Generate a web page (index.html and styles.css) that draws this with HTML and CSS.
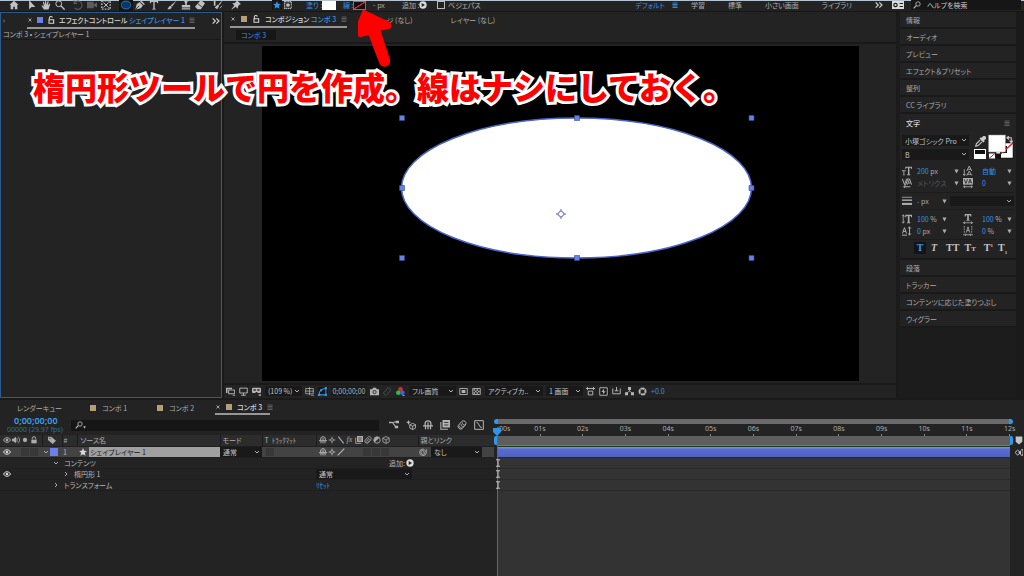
FILE: index.html
```html
<!DOCTYPE html>
<html lang="ja">
<head>
<meta charset="utf-8">
<meta name="viewport" content="width=device-width, initial-scale=1">
<title>コンポ 3</title>
<link rel="stylesheet" href="styles.css">
</head>
<body>
<svg class="sprite" aria-hidden="true">
  <symbol id="home" viewBox="0 0 12 12"><path fill="currentColor" d="M6 1 0.5 6H2v5h3V8h2v3h3V6h1.500z"/></symbol>
  <symbol id="arrow" viewBox="0 0 12 12"><path fill="currentColor" d="M2.500 0v11l3-2.700 4.500.2z"/></symbol>
  <symbol id="hand" viewBox="0 0 12 12"><path fill="currentColor" d="M3.500 11.500 0.500 7l1-.7L3.500 8 2.300 2.500l1.200-.3L4.800 6 5 1h1.200l.4 5L8 1.500l1.200.3L8.500 6.500l1.700-2.300 1 .6L9 11.500z"/></symbol>
  <symbol id="search" viewBox="0 0 12 12"><circle cx="7.500" cy="4.500" r="3.300" fill="none" stroke="currentColor" stroke-width="1.200"/><path stroke="currentColor" stroke-width="1.600" d="M5 7 1 11"/></symbol>
  <symbol id="zoomt" viewBox="0 0 12 12"><circle cx="4.500" cy="4.500" r="3.500" fill="none" stroke="currentColor" stroke-width="1.200"/><path stroke="currentColor" stroke-width="1.600" d="m7 7 4.500 4.500"/></symbol>
  <symbol id="rotate" viewBox="0 0 12 12"><path fill="none" stroke="currentColor" stroke-width="1.300" d="M2 3a5 5 0 1 1 0 6.500M1.500 0.500V4H5"/></symbol>
  <symbol id="video" viewBox="0 0 12 12"><path fill="currentColor" d="M0 2h8v3l4-2v6L8 7v3H0z"/></symbol>
  <symbol id="anchor" viewBox="0 0 12 12"><path fill="none" stroke="currentColor" stroke-width="1.600" stroke-dasharray="2 1.500" d="M1 1h10v10H1z"/><path stroke="currentColor" stroke-width="1.200" d="M3 3l6 6M9 3 3 9"/></symbol>
  <symbol id="ellipse" viewBox="0 0 12 12"><ellipse cx="6" cy="6" rx="6" ry="4.700" fill="#0a3763" stroke="#2c83cf"/></symbol>
  <symbol id="pen" viewBox="0 0 12 12"><path fill="currentColor" d="m7 0 5 5-1.500 1L6 1.500zM5.500 2.500 9.500 6.500 7 10 0.500 11.500 2 5z"/><path stroke="#232323" d="M1 11l4-4"/></symbol>
  <symbol id="tt" viewBox="0 0 12 12"><path fill="currentColor" d="M1 1h10v3H10L9 2.300H6.800v8l1.400.4v.8H3.800v-.8l1.400-.4v-8H3L2 4H1z"/></symbol>
  <symbol id="brush" viewBox="0 0 12 12"><path fill="currentColor" d="M11.500.5 6 8 4.500 6.500zM4 7l1.700 1.700C5 11 2.500 11.500.5 11 2 10 2 7.500 4 7z"/></symbol>
  <symbol id="stamp" viewBox="0 0 12 12"><path fill="currentColor" d="M4 0h4v2L7 3.500V6h4v3H1V6h4V3.500L4 2zM1 10h10v1.500H1z"/></symbol>
  <symbol id="eraser" viewBox="0 0 12 12"><path fill="currentColor" d="m7 0 5 4-5 7H3L0 8z"/><path stroke="#232323" d="m3.500 4.500 5 4"/></symbol>
  <symbol id="roto" viewBox="0 0 12 12"><path fill="currentColor" d="M12 0 8 6 6.500 5zM6 5.500 7.500 7 5 11 2 9zM1 1l2 0 0 6-2 0z"/><path fill="none" stroke="currentColor" d="m8 10 3-3"/></symbol>
  <symbol id="pin" viewBox="0 0 12 12"><path fill="currentColor" d="m7 0 5 5-1.500.5-2 2-.5 3L5.500 8 1 11.500.5 11 4 6.500 1.500 4l3-.5 2-2z"/></symbol>
  <symbol id="star" viewBox="0 0 12 12"><path fill="currentColor" d="m6 0 1.700 4.200L12 4.500 8.700 7.300 9.800 11.700 6 9.300 2.200 11.700 3.300 7.300 0 4.500l4.300-.3z"/></symbol>
  <symbol id="maskmode" viewBox="0 0 12 12"><path fill="none" stroke="currentColor" stroke-width="1.800" stroke-dasharray="1.800 .8" d="M1 1h10v10H1z"/><circle cx="6" cy="6" r="2.800" fill="currentColor"/></symbol>
  <symbol id="play" viewBox="0 0 12 12"><circle cx="6" cy="6" r="5.500" fill="#ddd"/><path fill="#222" d="M4 3v6l5-3z"/></symbol>
  <symbol id="lock" viewBox="0 0 12 12"><path fill="currentColor" d="M2 5.500h8V11H2z"/><path fill="none" stroke="currentColor" stroke-width="1.500" d="M3.500 5V3.500a2.500 2.500 0 0 1 5 0V5"/></symbol>
  <symbol id="unlock" viewBox="0 0 12 12"><path fill="none" stroke="currentColor" stroke-width="1.600" d="M3 5.500h7V11H3zM3.500 5V3a2.300 2.300 0 0 1 4.500-.5"/></symbol>
  <symbol id="close" viewBox="0 0 12 12"><path stroke="currentColor" stroke-width="1.400" d="m3 3 6 6M9 3 3 9"/></symbol>
  <symbol id="menu" viewBox="0 0 12 12"><path stroke="currentColor" stroke-width="1.800" d="M1 2h10M1 5h10M1 8h10M1 11h10"/></symbol>
  <symbol id="more" viewBox="0 0 12 12"><path fill="none" stroke="currentColor" stroke-width="1.700" d="m1 2 4 4-4 4M6.500 2l4 4-4 4"/></symbol>
  <symbol id="chev" viewBox="0 0 12 12"><path fill="none" stroke="currentColor" stroke-width="1.800" d="m2 4 4 4 4-4"/></symbol>
  <symbol id="chevr" viewBox="0 0 12 12"><path fill="none" stroke="currentColor" stroke-width="1.800" d="m4 2 4 4-4 4"/></symbol>
  <symbol id="tri" viewBox="0 0 12 12"><path fill="currentColor" d="M1 1h10L6 11z"/></symbol>
  <symbol id="book" viewBox="0 0 12 12"><path fill="#ddd" d="M0 2h12v8H0z"/><circle cx="3.500" cy="6" r="1.700" fill="none" stroke="#222" stroke-width="1.200"/><path stroke="#222" stroke-width="1.200" d="M7.500 4.500H11M7.500 7.500H11"/></symbol>
  <symbol id="drop" viewBox="0 0 12 12"><path fill="currentColor" d="M8.500.5a2 2 0 0 1 3 3L10 5l.5 1L9 7 5 3l1-1.500 1 .5z"/><path fill="none" stroke="currentColor" stroke-width="1.200" d="M5.500 4.500 1.500 8.500.8 11.200 3.500 10.500l4-4"/></symbol>
  <symbol id="swap" viewBox="0 0 12 12"><path fill="none" stroke="currentColor" stroke-width="1.800" d="M3 3h6v7M5 0 1.500 3 5 6M6 8l3 3.500L12 8"/></symbol>
  <symbol id="sizeT" viewBox="0 0 12 12"><path fill="currentColor" d="M4 1h8v2.500h-.8L10.600 2H8.900v8l1.100.3v.7H6v-.7L7.200 10V2H5.500L4.800 3.500H4zM0 5h4.500v1.500H4L3.700 6h-.9v4.500h.7v.5H1v-.5h.7V6H.8l-.3.500H0z"/></symbol>
  <symbol id="leading" viewBox="0 0 12 12"><path fill="none" stroke="currentColor" stroke-width="1.100" d="M4.500 6 7.500 0l3 6M5.500 4h4M4.500 11.500 7.500 6l3 5.500M5.500 10h4M1.500 4v7M0 9.500l1.500 2L3 9.500"/></symbol>
  <symbol id="kern" viewBox="0 0 12 12"><path fill="none" stroke="currentColor" stroke-width="1.200" d="m.5 1 2.500 7L5.500 1M6.500 8 9 1l2.500 7M7.500 6h3M7.500 0 4 9M2 10.500h8M4 9 2 10.500 4 12"/></symbol>
  <symbol id="track" viewBox="0 0 12 12"><path fill="currentColor" d="M0 0h12v8H0z"/><path fill="none" stroke="#222" d="m1.500 1.500 2 5 2-5M6.500 6.500l2-5 2 5M7.500 5h2"/><path fill="none" stroke="currentColor" d="M0 10.500h12M2 9v3M10 9v3"/></symbol>
  <symbol id="lines" viewBox="0 0 12 12"><path stroke="currentColor" d="M0 1.500h12"/><path stroke="currentColor" stroke-width="1.700" d="M0 5h12"/><path stroke="currentColor" stroke-width="2.500" d="M0 9.500h12"/></symbol>
  <symbol id="vscale" viewBox="0 0 12 12"><path fill="currentColor" d="M4 1h8v3h-1L10.500 2.300H9V10l1 .3v.7H6v-.7L7 10V2.300H5.500L5 4H4z"/><path fill="none" stroke="currentColor" d="M1.500 1v10M0 3l1.500-2L3 3M0 9l1.500 2L3 9"/></symbol>
  <symbol id="hscale" viewBox="0 0 12 12"><path fill="currentColor" d="M2 0h8v3H9l-.5-1.500H7V7l1 .3V8H4v-.7L5 7V1.500H3.500L3 3H2z"/><path fill="none" stroke="currentColor" d="M.5 10.500h11M2.500 9 .5 10.500l2 1.500M9.500 9l2 1.500-2 1.500"/></symbol>
  <symbol id="base" viewBox="0 0 12 12"><path fill="none" stroke="currentColor" stroke-width="1.200" d="m.5 9 2.500-7 2.500 7M1.500 6.500h3M0 11h6M9 1v10M7.500 3 9 1l1.500 2M7.500 9 9 11l1.500-2"/></symbol>
  <symbol id="tsume" viewBox="0 0 12 12"><path fill="none" stroke="currentColor" d="M1.500 0v2M1.500 3v2M1.500 6v2M10.500 0v2M10.500 3v2M10.500 6v2M4 8l2-7 2 7M4.500 5.500h3M0 10.500h12M2.500 9l1.500 1.500L2.500 12M9.500 9 8 10.500 9.500 12"/></symbol>
  <symbol id="boxes" viewBox="0 0 12 12"><path fill="currentColor" d="M0 1h8v2H2v5H0z"/><path fill="none" stroke="currentColor" stroke-width="1.300" d="M3.500 4h8v5h-8zM9 11h3"/></symbol>
  <symbol id="monitor" viewBox="0 0 12 12"><path fill="none" stroke="currentColor" stroke-width="1.300" d="M1 1.500h10V8H1zM6 8v3M3 11h6"/></symbol>
  <symbol id="vr" viewBox="0 0 12 12"><path fill="currentColor" d="M1 1h10l1 1v5l-1 1H8L6.500 6.500h-1L4 8H1L0 7V2zM9 9.500h3v2H9z"/><path fill="#222" d="M2 3h3v2H2zM7 3h3v2H7z"/></symbol>
  <symbol id="guides" viewBox="0 0 12 12"><path fill="none" stroke="currentColor" d="M1 2h10v7H1zM6 0v11M0 5.500h12M8 11h4"/></symbol>
  <symbol id="maskshape" viewBox="0 0 12 12"><path fill="none" stroke="currentColor" stroke-width="1.400" d="M1.500 10.500C1.500 5 5 2 10.500 2v8.500z"/><path fill="currentColor" d="M0 9h3v3H0zM9 0h3v3H9zM9 9h3v3H9zM3 3h2.500v2.500H3z"/></symbol>
  <symbol id="camera" viewBox="0 0 12 12"><path fill="currentColor" d="M0 3h3l1-2h4l1 2h3v8H0z"/><circle cx="6" cy="6.700" r="2.200" fill="none" stroke="#222" stroke-width="1.200"/></symbol>
  <symbol id="ghost" viewBox="0 0 12 12"><path fill="none" stroke="currentColor" d="M7.500 1a3 3 0 0 1 1 5.500l-5 5L.5 8l4-4a3 3 0 0 1 3-3z"/></symbol>
  <symbol id="rgb" viewBox="0 0 12 12"><circle cx="6" cy="3" r="3" fill="#e22a2a"/><circle cx="3" cy="7.500" r="3" fill="#24c43a"/><circle cx="8.500" cy="7.500" r="3" fill="#3468e8"/><path fill="#ccc" d="M8 10.500h4l-2 1.500z"/></symbol>
  <symbol id="roi" viewBox="0 0 12 12"><path fill="none" stroke="currentColor" stroke-width="1.200" d="M1 2h10v8H1z"/><path fill="currentColor" d="M3.500 4h5v4h-5z"/></symbol>
  <symbol id="checker" viewBox="0 0 12 12"><path fill="none" stroke="currentColor" stroke-width="1.200" d="M1 2h10v8H1z"/><path fill="currentColor" d="M2 3h2v2H2zM6 3h2v2H6zM4 5h2v2H4zM8 5h2v2H8zM2 7h2v2H2zM6 7h2v2H6z"/></symbol>
  <symbol id="aspect" viewBox="0 0 12 12"><path fill="none" stroke="currentColor" stroke-width="1.300" d="M0 2h12M2 0v4M10 0v4M3 5.500h6v5H3z"/></symbol>
  <symbol id="fast" viewBox="0 0 12 12"><path fill="none" stroke="currentColor" stroke-width="1.300" d="M1 1h10v10H1z"/><path fill="currentColor" d="M7 2 3 6.500h2.500L5 10l4-4.500H6.500z"/></symbol>
  <symbol id="tlicon" viewBox="0 0 12 12"><path fill="none" stroke="currentColor" stroke-width="1.300" d="M1 2v7h10V2M3.500 5h5M6 0v5"/></symbol>
  <symbol id="flow" viewBox="0 0 12 12"><path fill="currentColor" d="M4 0h4v4H4zM0 7h4v4H0zM8 7h4v4H8z"/><path fill="none" stroke="currentColor" d="M6 4v2M2 8l4-2.500L10 8"/></symbol>
  <symbol id="aperture" viewBox="0 0 12 12"><circle cx="6" cy="6" r="4" fill="none" stroke="currentColor" stroke-width="2.600"/><path stroke="#222" stroke-width=".8" d="m2 2 3 2M10 1 8 5M11 9 7 7M3 11l1-4"/></symbol>
  <symbol id="eye" viewBox="0 0 12 12"><path fill="none" stroke="currentColor" stroke-width="1.500" d="M.8 6C3 1.500 9 1.500 11.200 6 9 10.500 3 10.500.8 6z"/><circle cx="6" cy="6" r="2" fill="currentColor"/></symbol>
  <symbol id="audio" viewBox="0 0 12 12"><path fill="currentColor" d="M0 4h2l4-3v10L2 8H0z"/><path fill="none" stroke="currentColor" stroke-width="1.300" d="M7.500 3v6M9 1c3 3 3 7 0 10"/></symbol>
  <symbol id="dot" viewBox="0 0 12 12"><circle cx="6" cy="6" r="3.200" fill="currentColor"/></symbol>
  <symbol id="tag" viewBox="0 0 12 12"><path fill="currentColor" d="M0 1h5l7 6-5 5-7-6z"/><circle cx="3" cy="3.500" r="1" fill="#222"/></symbol>
  <symbol id="shy" viewBox="0 0 12 12"><path fill="none" stroke="currentColor" stroke-width="1.500" d="M2.500 7V4.500a3.500 3.500 0 0 1 7 0V7M0 7h12M3 7v4M9 7v4M6 3v8"/></symbol>
  <symbol id="sun" viewBox="0 0 12 12"><circle cx="6" cy="6" r="2.200" fill="none" stroke="currentColor" stroke-width="1.300"/><path stroke="currentColor" stroke-width="1.300" d="M6 1v2M6 9v2M1 6h2M9 6h2"/></symbol>
  <symbol id="bslash" viewBox="0 0 12 12"><path stroke="currentColor" stroke-width="1.600" d="m2 1 8 10"/></symbol>
  <symbol id="slash" viewBox="0 0 12 12"><path stroke="currentColor" stroke-width="1.600" d="M1 11 11 1"/></symbol>
  <symbol id="film" viewBox="0 0 12 12"><path fill="currentColor" d="M3 0h9v9H3z"/><path fill="none" stroke="currentColor" stroke-width="1.300" d="M1 2.500v8.500h8.500"/><path stroke="#222" d="M5 3h5M5 6h5"/></symbol>
  <symbol id="blur" viewBox="0 0 12 12"><path fill="none" stroke="currentColor" stroke-width="1.200" d="M8 1a3 3 0 0 1 2 5l-4 4.500a3.200 3.200 0 0 1-4.500-4L5.500 2A3 3 0 0 1 8 1zM3 7a2 2 0 0 0 2.500 2.500M5 5a2.500 2.500 0 0 0 3 3M6.500 3a2.500 2.500 0 0 0 3 3"/></symbol>
  <symbol id="adj" viewBox="0 0 12 12"><circle cx="6" cy="6" r="4.800" fill="none" stroke="currentColor" stroke-width="1.300"/><path fill="currentColor" d="M9.500 2.500 2.500 9.500A5 5 0 0 1 9.500 2.500z"/></symbol>
  <symbol id="cube" viewBox="0 0 12 12"><path fill="none" stroke="currentColor" stroke-width="1.200" d="m6 .8 4.800 2.400v5.600L6 11.200 1.200 8.800V3.200zM1.200 3.200 6 6l4.800-2.800M6 6v5"/></symbol>
  <symbol id="mini" viewBox="0 0 12 12"><path fill="none" stroke="currentColor" stroke-width="1.300" d="M0 3h4l5-1M4 3l4 5"/><path fill="currentColor" d="M8 1h4v3H8zM7 7h4v3H7zM0 2h3v2H0z"/></symbol>
  <symbol id="draft" viewBox="0 0 12 12"><path fill="none" stroke="currentColor" stroke-width="1.100" d="m8 4 3.500 1.700v4L8 11.500 4.500 9.700v-4zM4.500 5.700 8 7.500l3.500-1.800M8 7.500v4"/><path fill="currentColor" d="m3 0 1 2 2 .5-2 1L3 6 2 3.500 0 2.500 2 2z"/></symbol>
  <symbol id="graph" viewBox="0 0 12 12"><path fill="none" stroke="currentColor" stroke-width="1.200" d="M.8.800h10.400v10.400H.8zM3 3c4 0 2 6 6.500 6"/></symbol>
  <symbol id="spiral" viewBox="0 0 12 12"><path fill="none" stroke="currentColor" stroke-width="1.200" d="M11 2v5A5 5 0 1 1 6 1.500 4 4 0 0 1 9 7a3 3 0 1 1-3-3.500A2 2 0 0 1 6 7"/></symbol>
  <symbol id="marker" viewBox="0 0 12 12"><path fill="currentColor" d="M1 0h10v8l-5 4-5-4z"/></symbol>
  <symbol id="keys" viewBox="0 0 12 12"><path fill="none" stroke="currentColor" stroke-width="1.500" d="m0 6 4-3.500L8 6l-4 4zM9 2h3v8H9"/><path fill="currentColor" d="m5 6 4-3.500V10z"/></symbol>
  <symbol id="ibeam" viewBox="0 0 12 12"><path fill="none" stroke="currentColor" stroke-width="1.600" d="M3 1h6M3 11h6M6 1v10"/></symbol>
</svg>

<div class="app">
  <header class="toolbar">
    <div class="tools">
      <button aria-label="ホーム" class="home"><svg><use href="#home"/></svg></button>
      <button aria-label="選択"><svg><use href="#arrow"/></svg></button>
      <button aria-label="手のひら"><svg><use href="#hand"/></svg></button>
      <button aria-label="ズーム"><svg><use href="#zoomt"/></svg></button>
      <button aria-label="回転" class="dim after"><svg><use href="#rotate"/></svg></button>
      <button aria-label="カメラ" class="dim"><svg><use href="#video"/></svg></button>
      <button aria-label="アンカーポイント"><svg><use href="#anchor"/></svg></button>
      <button aria-label="楕円形" class="active"><svg><use href="#ellipse"/></svg></button>
      <button aria-label="ペン"><svg><use href="#pen"/></svg></button>
      <button aria-label="文字"><svg><use href="#tt"/></svg></button>
      <button aria-label="ブラシ" class="after"><svg><use href="#brush"/></svg></button>
      <button aria-label="コピースタンプ"><svg><use href="#stamp"/></svg></button>
      <button aria-label="消しゴム"><svg><use href="#eraser"/></svg></button>
      <button aria-label="ロトブラシ" class="after"><svg><use href="#roto"/></svg></button>
      <button aria-label="パペットピン" class="after"><svg><use href="#pin"/></svg></button>
    </div>
    <div class="options">
      <button aria-label="シェイプを作成" class="blue boxed"><svg class="i8"><use href="#star"/></svg></button>
      <button aria-label="マスクを作成" class="maskbtn"><svg class="i8"><use href="#maskmode"/></svg></button>
      <button class="blue fill-label">塗り :</button><span class="fill"></span>
      <button class="blue stroke-label">線 :</button><span class="stroke"></span>
      <span class="strokew"><b class="blue">-</b> px</span>
      <span class="add">追加 :</span><button aria-label="追加"><svg class="i8"><use href="#play"/></svg></button>
      <label class="bezier"><input type="checkbox">ベジェパス</label>
    </div>
    <nav class="workspaces">
      <button class="blue">デフォルト</button><button aria-label="メニュー" class="blue wsmenu"><svg class="i6"><use href="#menu"/></svg></button>
      <button>学習</button><button>標準</button><button>小さい画面</button><button>ライブラリ</button>
    </nav>
    <button aria-label="その他" class="bright"><svg class="i8"><use href="#more"/></svg></button>
    <button aria-label="ワークスペース" class="bookbtn"><svg class="i12"><use href="#book"/></svg></button>
    <label class="help"><svg class="i8"><use href="#search"/></svg><input type="text" placeholder="ヘルプを検索" aria-label="ヘルプを検索"></label>
  </header>

  <main class="workarea">
    <section class="effects">
      <div class="ptabs">
        <svg class="i6 edge"><use href="#chevr"/></svg>
        <div class="tab on"><svg class="i6"><use href="#close"/></svg><i class="sw violet"></i><svg class="i8"><use href="#unlock"/></svg><span>エフェクトコントロール <em>シェイプレイヤー 1</em></span><svg class="i6 dim"><use href="#menu"/></svg></div>
        <svg class="i8 bright push"><use href="#more"/></svg>
      </div>
      <p class="crumb">コンポ 3 • シェイプレイヤー 1</p>
      <div class="fxbody"></div>
    </section>

    <section class="comp">
      <div class="ptabs">
        <div class="tab on"><svg class="i6"><use href="#close"/></svg><i class="sw tan"></i><svg class="i8"><use href="#unlock"/></svg><span>コンポジション <em>コンポ 3</em></span><svg class="i6 dim"><use href="#menu"/></svg></div>
        <span class="tab footage">フッテージ (なし)</span><span class="tab layer">レイヤー (なし)</span>
      </div>
      <div class="crumbs"><button class="blue">コンポ 3</button></div>
      <div class="viewer">
        <svg class="canvas" viewBox="0 0 597 335" preserveAspectRatio="xMidYMid meet">
          <ellipse cx="314.500" cy="142" rx="175" ry="70" fill="#fff" stroke="#4d66cc" stroke-width="1.500"/>
          <g fill="#6681e8" stroke="#33488f" stroke-width=".6">
            <path d="M137.500 69.500h5v5h-5zM312.500 69.500h5v5h-5zM487 69.500h5v5h-5zM137.500 139.500h5v5h-5zM487 139.500h5v5h-5zM137.500 209.500h5v5h-5zM312.500 209.500h5v5h-5zM487 209.500h5v5h-5z"/>
          </g>
          <path fill="none" stroke="#8b93c4" stroke-width="1.300" d="m299 164.500 3.500 3.500-3.500 3.500-3.500-3.500zM299 163v3M299 170v3M294 168h3M301 168h3"/>
        </svg>
      </div>
      <div class="viewbar">
        <button aria-label="プレビュー"><svg><use href="#boxes"/></svg></button>
        <button aria-label="モニター"><svg><use href="#monitor"/></svg></button>
        <button aria-label="VR"><svg><use href="#vr"/></svg></button>
        <span class="select w-zoom"><select aria-label="倍率"><option>(109 %)</option></select><svg><use href="#chev"/></svg></span>
        <button aria-label="ガイド"><svg><use href="#guides"/></svg></button>
        <button aria-label="マスク表示" class="blue boxed"><svg><use href="#maskshape"/></svg></button>
        <button class="tc">0;00;00;00</button>
        <button aria-label="スナップショット"><svg><use href="#camera"/></svg></button>
        <button aria-label="表示" class="faint"><svg><use href="#ghost"/></svg></button>
        <button aria-label="チャンネル"><svg><use href="#rgb"/></svg></button>
        <span class="select w-res"><select aria-label="画質"><option>フル画質</option></select><svg><use href="#chev"/></svg></span>
        <button aria-label="目標範囲"><svg><use href="#roi"/></svg></button>
        <button aria-label="透明グリッド"><svg><use href="#checker"/></svg></button>
        <span class="select w-cam"><select aria-label="カメラ"><option>アクティブカ..</option></select><svg><use href="#chev"/></svg></span>
        <span class="select w-view"><select aria-label="ビュー"><option>1 画面</option></select><svg><use href="#chev"/></svg></span>
        <button aria-label="縦横比"><svg><use href="#aspect"/></svg></button>
        <button aria-label="高速プレビュー" class="boxed"><svg><use href="#fast"/></svg></button>
        <button aria-label="タイムライン"><svg><use href="#tlicon"/></svg></button>
        <button aria-label="フローチャート"><svg><use href="#flow"/></svg></button>
        <button aria-label="露出"><svg><use href="#aperture"/></svg></button>
        <span class="blue">+0.0</span>
      </div>
    </section>

    <aside class="side">
      <button class="acc">情報</button>
      <button class="acc">オーディオ</button>
      <button class="acc">プレビュー</button>
      <button class="acc">エフェクト＆プリセット</button>
      <button class="acc">整列</button>
      <button class="acc">CC ライブラリ</button>
      <button class="acc open">文字<svg class="i6"><use href="#menu"/></svg></button>
      <div class="char">
        <div class="fontrow">
          <div class="fonts">
            <span class="select"><select aria-label="フォント"><option>小塚ゴシック Pro</option></select><svg><use href="#chev"/></svg></span>
            <span class="select"><select aria-label="スタイル"><option>B</option></select><svg><use href="#chev"/></svg></span>
          </div>
          <svg class="swatches" viewBox="0 0 40 26" role="img" aria-label="塗りと線">
            <use href="#drop" x="1" y="1" width="11" height="11"/>
            <path fill="#fff" d="M0 14h12v10H0z"/><path fill="#111" d="M1 15h10v4H1z"/>
            <path fill="#fff" stroke="#000" stroke-width=".5" d="M22 8h17v15H22z"/><path fill="#111" d="M26 11h7v7h-7z"/><path stroke="#d22" stroke-width="1.500" d="M22 23 39 8"/>
            <path fill="#fff" stroke="#888" stroke-width=".5" d="M14.500 0h17v17h-17z"/>
            <path fill="#fff" d="M15 18.500h6v5h-6z"/><path stroke="#d22" d="m15 23.500 6-5"/>
            <path fill="#111" d="M22 18.500h5v5h-5z"/>
            <use href="#swap" x="32" y="1" width="7" height="7"/>
          </svg>
        </div>
        <div class="metrics">
          <svg><use href="#sizeT"/></svg><span><b>200</b> px</span><svg class="t"><use href="#tri"/></svg>
          <svg><use href="#leading"/></svg><span><b>自動</b></span><svg class="t"><use href="#tri"/></svg>
          <svg><use href="#kern"/></svg><span class="faint">メトリクス</span><svg class="t"><use href="#tri"/></svg>
          <svg><use href="#track"/></svg><span><b>0</b></span><svg class="t"><use href="#tri"/></svg>
        </div>
        <div class="strokerow">
          <svg><use href="#lines"/></svg><span><b>-</b> px</span><svg class="t"><use href="#tri"/></svg>
          <span class="select"><select aria-label="線の種類"><option></option></select><svg><use href="#chev"/></svg></span>
        </div>
        <div class="metrics narrow">
          <svg><use href="#vscale"/></svg><span><b>100</b> %</span><svg class="t"><use href="#tri"/></svg>
          <svg><use href="#hscale"/></svg><span><b>100</b> %</span><svg class="t"><use href="#tri"/></svg>
          <svg><use href="#base"/></svg><span><b>0</b> px</span><svg class="t"><use href="#tri"/></svg>
          <svg><use href="#tsume"/></svg><span><b>0</b> %</span><svg class="t"><use href="#tri"/></svg>
        </div>
        <div class="styles">
          <button class="on">T</button><button class="ital">T</button><button class="caps">TT</button><button>T<small>T</small></button><button class="sup">T<sup>1</sup></button><button>T<sub>1</sub></button>
        </div>
      </div>
      <button class="acc">段落</button>
      <button class="acc">トラッカー</button>
      <button class="acc">コンテンツに応じた塗りつぶし</button>
      <button class="acc">ウィグラー</button>
    </aside>
  </main>

  <section class="timeline">
    <div class="tltabs">
      <button class="queue">レンダーキュー</button>
      <button class="ctab"><i class="sw tan"></i>コンポ 1</button>
      <button class="ctab"><i class="sw tan"></i>コンポ 2</button>
      <button class="ctab on"><svg class="i6"><use href="#close"/></svg><i class="sw tan"></i>コンポ 3<svg class="i6 dim"><use href="#menu"/></svg></button>
    </div>
    <div class="tlmain">
      <div class="layers">
        <div class="tlhead">
          <div class="time"><strong>0;00;00;00</strong><small>00000 (29.97 fps)</small></div>
          <label class="lsearch"><svg><use href="#search"/></svg><svg class="caret"><use href="#tri"/></svg><input type="text" aria-label="レイヤーを検索"></label>
          <div class="tlicons">
            <button aria-label="ミニフローチャート"><svg><use href="#mini"/></svg></button>
            <button aria-label="ドラフト 3D"><svg><use href="#draft"/></svg></button>
            <button aria-label="シャイ"><svg><use href="#shy"/></svg></button>
            <button aria-label="フレームブレンド"><svg><use href="#film"/></svg></button>
            <button aria-label="モーションブラー"><svg><use href="#blur"/></svg></button>
            <button aria-label="グラフエディター"><svg><use href="#graph"/></svg></button>
          </div>
        </div>
        <table>
          <colgroup><col class="c1"><col class="c2"><col class="c3"><col class="c4"><col class="c5"><col class="c6"><col class="c7"><col class="c8"></colgroup>
          <thead><tr>
            <th><div class="ic"><svg><use href="#eye"/></svg><svg><use href="#audio"/></svg><svg><use href="#dot"/></svg><svg><use href="#lock"/></svg></div></th>
            <th><div class="ic taghead"><svg><use href="#tag"/></svg></div></th><th class="num"><i>#</i></th><th class="src">ソース名</th><th>モード</th><th>T&nbsp; ﾄﾗｯｸﾏｯﾄ</th>
            <th><div class="ic sws"><svg><use href="#shy"/></svg><svg><use href="#sun"/></svg><svg><use href="#bslash"/></svg><i class="fx">fx</i><svg><use href="#film"/></svg><svg><use href="#blur"/></svg><svg><use href="#adj"/></svg><svg><use href="#cube"/></svg></div></th>
            <th>親とリンク</th>
          </tr></thead>
          <tbody>
            <tr class="layer-row">
              <td><div class="ic"><svg class="bright"><use href="#eye"/></svg><i class="cell gapl"></i><i class="cell"></i></div></td>
              <td><div class="ic lab"><svg class="i6"><use href="#chev"/></svg><i class="sw violet big"></i></div></td>
              <td class="num">1</td>
              <td class="namecell"><div class="ic name"><svg class="bright"><use href="#star"/></svg><span class="lname">シェイプレイヤー 1</span></div></td>
              <td><span class="select"><select aria-label="モード"><option>通常</option></select><svg><use href="#chev"/></svg></span></td>
              <td><i class="cell"></i></td>
              <td><div class="ic sws"><svg><use href="#shy"/></svg><svg><use href="#sun"/></svg><svg><use href="#slash"/></svg><i class="cell skip"></i><i class="cell"></i><i class="cell"></i></div></td>
              <td><div class="ic par"><svg><use href="#spiral"/></svg><span class="select"><select aria-label="親"><option>なし</option></select><svg><use href="#chev"/></svg></span></div></td>
            </tr>
            <tr>
              <td></td><td colspan="5"><div class="ic tree"><svg class="i6"><use href="#chev"/></svg>コンテンツ</div></td>
              <td><div class="ic addc">追加: <svg><use href="#play"/></svg></div></td><td></td>
            </tr>
            <tr>
              <td><div class="ic"><svg class="bright"><use href="#eye"/></svg></div></td><td colspan="5"><div class="ic tree deep"><svg class="i6"><use href="#chevr"/></svg>楕円形 1</div></td>
              <td><span class="select blend"><select aria-label="合成モード"><option>通常</option></select><svg><use href="#chev"/></svg></span></td><td></td>
            </tr>
            <tr>
              <td></td><td colspan="5"><div class="ic tree"><svg class="i6"><use href="#chevr"/></svg>トランスフォーム</div></td>
              <td><a class="reset" href="#reset">ﾘｾｯﾄ</a></td><td></td>
            </tr>
          </tbody>
        </table>
      </div>
      <div class="tracks">
        <div class="navbar"></div>
        <div class="ruler"><span>:00s</span><span>01s</span><span>02s</span><span>03s</span><span>04s</span><span>05s</span><span>06s</span><span>07s</span><span>08s</span><span>09s</span><span>10s</span><span>11s</span><span>12s</span></div>
        <div class="work"></div>
        <div class="green"></div>
        <div class="bar"></div>
        <div class="trow"><svg><use href="#ibeam"/></svg></div>
        <div class="trow"><svg><use href="#ibeam"/></svg></div>
        <div class="trow"><svg><use href="#ibeam"/></svg></div>
        <div class="tfill"></div>
        <div class="playhead"><svg viewBox="0 0 8 8"><path fill="#2d94e8" d="M0 0h8v4L4 8 0 4z"/></svg></div>
      </div>
      <div class="gutter"><svg><use href="#marker"/></svg><svg><use href="#keys"/></svg></div>
    </div>
  </section>

  <p class="note">楕円形ツールで円を作成。線はナシにしておく。</p>
  <svg class="pointer" viewBox="0 0 38 60" aria-hidden="true"><path fill="#f00" stroke="#f00" stroke-width="4" stroke-linejoin="round" d="M8 3 33 15v3l-11 2 10 31a3 3 0 0 1-7 2L14 24 4 26V13z"/></svg>
</div>
</body>
</html>
```

FILE: styles.css
```css
* { box-sizing: border-box; }
body {
  margin: 0;
  background: #1a1a1a;
  color: #acacac;
  font-family: "Noto Sans CJK JP", "Noto Sans", sans-serif;
  font-size: 7px;
  line-height: 10px;
  font-feature-settings: "palt";
}
button, input, select {
  font: inherit;
  font-feature-settings: inherit;
  color: inherit;
  background: none;
  border: 0;
  padding: 0;
  margin: 0;
  outline: 0;
  white-space: nowrap;
}
p { margin: 0; }
i, em { font-style: normal; }
svg { display: block; width: 10px; height: 10px; flex: none; overflow: visible; }
.sprite { position: absolute; width: 0; height: 0; }
.i6 { width: 6px; height: 6px; }
.i8 { width: 8px; height: 8px; }
.i12 { width: 12px; height: 12px; }
.blue, em { color: #3493e4; }
.bright { color: #d8d8d8; }
.dim { color: #626262; }
.faint { color: #555; }
.boxed { background: #161616; }

.app {
  position: relative;
  display: flex;
  flex-direction: column;
  min-height: 100vh;
  overflow: hidden;
}

/* Tool bar */
.toolbar {
  display: flex;
  align-items: center;
  height: 12px;
  padding-bottom: 2px;
  background: #232323;
  border-top: 1px solid #b4c3cf;
  border-bottom: 1px solid #161616;
}
.toolbar > * { flex: none; }
.tools, .options, .workspaces { display: flex; align-items: center; white-space: nowrap; }
.tools { padding-left: 9px; gap: 4px; color: #c0c0c0; }
.tools .home { margin-right: 4px; }
.tools .dim { color: #5c5c5c; }
.tools .after { margin-left: 4px; }
.tools .active { margin-left: 6px; background: #141414; outline: 2px solid #141414; }
.options { padding-left: 31px; }
.options .boxed { padding: 1px; }
.maskbtn { margin-left: 2px; color: #c0c0c0; }
.fill-label { width: 16px; margin-left: 14px; text-align: left; }
.stroke-label { width: 10px; margin-left: 7px; text-align: left; }
.fill { width: 14px; height: 9px; background: #fff; }
.stroke {
  width: 13px;
  height: 9px;
  border: 1px solid #777;
  background: linear-gradient(to bottom right, #111 43%, #d22 46%, #d22 54%, #111 57%);
}
.strokew { width: 36px; padding-left: 7px; }
.add { width: 17px; }
.bezier { display: flex; align-items: center; gap: 3px; margin-left: 10px; color: #b8b8b8; }
.bezier input { appearance: none; width: 8px; height: 8px; border: 1px solid #bbb; }
.workspaces { margin-left: auto; gap: 23px; padding-right: 23px; }
.workspaces .wsmenu { margin: 0 -10px 0 -16px; }
.bookbtn { margin-left: 9px; }
.help { display: flex; align-items: center; gap: 6px; width: 110px; height: 10px; margin-left: 7px; margin-right: 3px; padding-left: 2px; background: #161616; color: #c4c4c4; }
.help input { width: 80px; }
::placeholder { color: #c4c4c4; opacity: 1; }

/* Panels */
.workarea {
  flex: 1;
  display: grid;
  grid-template-columns: 222px minmax(0, 1fr) 118px;
  column-gap: 2px;
  padding-right: 8px;
}
.effects, .comp { display: flex; flex-direction: column; min-width: 0; background: #232323; }
.effects { border: 1px solid #2d5b8c; }
.ptabs { display: flex; align-items: flex-start; height: 16px; }
.tab { display: flex; align-items: center; gap: 5px; height: 16px; white-space: nowrap; }
.tab.on { color: #d6d6d6; border-bottom: 2px solid #969696; font-weight: 500; }
.effects .ptabs { padding: 0 1px; }
.edge { margin-top: 5px; width: 4px; }
.effects .tab { margin-left: 21px; gap: 4px; }
.push { margin: 4px 0 0 auto; }
.comp .ptabs { padding: 0 6px; height: 17px; }
.footage { margin-left: 15px; }
.layer { margin-left: 38px; }
.sw { flex: none; width: 6px; height: 6px; }
.violet { background: #6b80ea; }
.tan { background: #b79e76; }
.big { width: 8px; height: 8px; }
.crumb { height: 11px; padding-left: 2px; border-bottom: 1px solid #191919; color: #b4b4b4; }
.crumbs { height: 15px; padding: 1px 12px; border-bottom: 2px solid #191919; }
.crumbs button { display: block; width: 40px; height: 10px; padding-left: 5px; text-align: left; background: #161616; }
.viewer { flex: 1; display: flex; padding: 2px 37px 2px 38px; }
.canvas { flex: 1; width: 100%; height: auto; background: #000; }
.viewbar { display: flex; align-items: center; gap: 3px; height: 15px; padding: 0 2px 1px; border-top: 2px solid #191919; color: #b4b4b4; white-space: nowrap; }
.viewbar > button svg { width: 9px; height: 9px; }
.viewbar > button { min-width: 10px; }
.viewbar .tc { width: 36px; background: #1b1b1b; }

.select { position: relative; display: block; height: 10px; background: #191919; color: #c4c4c4; }
.select select { display: block; appearance: none; width: 100%; height: 10px; padding: 0 8px 0 3px; line-height: 10px; }
.select svg { position: absolute; right: 2px; top: 2px; width: 6px; height: 6px; pointer-events: none; }
.w-zoom { width: 37px; }
.w-res { width: 47px; }
.w-cam { width: 58px; }
.w-view { width: 37px; }

/* Side panels */
.side { display: flex; flex-direction: column; padding-left: 2px; background: #1c1c1c; }
.acc { display: flex; align-items: center; justify-content: space-between; height: 17px; padding: 0 6px; background: #232323; border-bottom: 2px solid #191919; text-align: left; }
.acc.open { color: #d6d6d6; border-bottom: 0; font-weight: 500; }
.acc.open svg { color: #626262; }
.char { padding: 4px 2px 2px; background: #232323; border-bottom: 2px solid #191919; }
.char b { font-weight: 400; color: #3493e4; }
.fontrow { display: flex; gap: 5px; height: 29px; }
.fonts { display: grid; gap: 3px; width: 68px; align-content: start; }
.fonts .select, .fonts select { height: 11px; }
.swatches { width: 40px; height: 26px; color: #ccc; }
.metrics { display: grid; grid-template-columns: 12px 34px 13px 13px 27px 11px; align-items: center; row-gap: 2px; padding: 2px 0 4px; border-bottom: 1px solid #1c1c1c; }
.metrics > span, .strokerow > span { padding-left: 3px; white-space: nowrap; }
.metrics > svg:nth-child(6n+4) { margin-left: 2px; }
.metrics > span:nth-child(6n+5) { padding-left: 8px; }
.metrics .t, .strokerow .t { width: 5px; height: 5px; margin-left: 6px; }
.strokerow { display: grid; grid-template-columns: 12px 22px 14px 1fr; align-items: center; padding: 3px 0; border-bottom: 1px solid #1c1c1c; }
.strokerow .select { padding: 0; }
.metrics.narrow { grid-template-columns: 12px 22px 25px 13px 27px 11px; padding: 4px 0 3px; }
.styles { display: flex; align-items: center; gap: 5px; height: 16px; padding-left: 12px; font-family: "Liberation Serif", serif; font-weight: 700; font-size: 10px; }
.styles button { height: 12px; line-height: 12px; color: #c4c4c4; }
.styles .on { width: 12px; background: #141414; color: #3a9cf0; }
.styles .ital { font-style: italic; }
.styles .caps { margin-left: 4px; }
.styles .sup { margin-left: 3px; }
.styles small { font-size: 7px; }
.styles sup, .styles sub { font-size: 5px; line-height: 0; }

/* Timeline */
.timeline { display: flex; flex-direction: column; height: 177px; margin-top: 2px; background: #232323; }
.tltabs { display: flex; align-items: flex-start; height: 15px; padding-left: 17px; }
.tltabs button { display: flex; align-items: center; gap: 6px; height: 15px; }
.queue { width: 73px; }
.ctab { width: 67px; }
.tltabs .on { width: 55px; margin-left: -9px; gap: 5px; color: #d6d6d6; font-weight: 500; border-bottom: 2px solid #969696; }
.tlmain { flex: 1; display: grid; grid-template-columns: 494px minmax(0, 1fr) 11px; }
.tlhead { display: flex; align-items: center; height: 20px; }
.time { width: 71px; padding-left: 7px; line-height: 9px; font-family: "Noto Sans", sans-serif; color: #2a6da6; white-space: nowrap; }
.time strong { display: block; padding-left: 7px; font-size: 9px; font-weight: 600; color: #3aa0f5; }
.time small { display: block; height: 9px; font-size: 7px; }
.lsearch { flex: 1; display: flex; align-items: center; height: 11px; padding-left: 4px; background: #161616; color: #c4c4c4; }
.lsearch svg { width: 8px; height: 8px; }
.lsearch .caret { width: 3px; height: 3px; margin-top: 4px; }
.tlicons { display: flex; gap: 7px; padding: 0 10px; color: #b4b4b4; }
table { width: 100%; border-collapse: collapse; table-layout: fixed; }
th, td { padding: 0; height: 11px; line-height: 10px; font-weight: 400; text-align: left; white-space: nowrap; vertical-align: middle; }
tbody { color: #b8b8b8; }
th { background: #2c2c2c; border-left: 1px solid #1c1c1c; padding-left: 2px; }
th:first-child { border-left: 0; padding-left: 0; }
tr { border-bottom: 1px solid #1f1f1f; }
.c1 { width: 42px; }
.c2 { width: 20px; }
.c3 { width: 15px; }
.c4 { width: 143px; }
.c5 { width: 42px; }
.c6 { width: 54px; }
.c7 { width: 102px; }
.ic { display: flex; align-items: center; gap: 1px; padding-left: 3px; }
.ic svg { width: 8px; height: 8px; }
.ic svg.i6 { width: 6px; height: 6px; }
.src { padding-left: 3px; }
.sws { padding-left: 0; }
td .sws { padding-left: 3px; }
.fx { width: 8px; font-family: "Liberation Serif", serif; font-size: 8px; font-style: italic; text-align: center; }
.layer-row { background: #434343; }
.cell { display: block; flex: none; width: 8px; height: 8px; background: #383838; }
td > .cell { margin-left: 4px; }
.gapl { margin-left: 9px; }
.skip { margin-left: 17px; }
.lab { padding-left: 1px; }
.num { padding-left: 1px; }
.name { padding-left: 2px; gap: 2px; }
.lname { flex: 1; height: 10px; padding-left: 1px; background: #a0a0a0; color: #161616; }
.par { padding-left: 1px; gap: 4px; }
.par .select { width: 51px; }
.ic .select svg { width: 6px; height: 6px; }
.tree { padding-left: 11px; gap: 5px; }
.deep { padding-left: 21px; }
.addc { justify-content: flex-end; padding-right: 4px; }
.blend { width: 96px; }
.reset { color: #3493e4; text-decoration: none; }

.tracks { position: relative; display: flex; flex-direction: column; padding: 0 3px; margin-top: 4px; background: #232323; }
.tracks > * { flex: none; }
.navbar { height: 5px; margin: 0 -3px; background: #6a6a6a; border: 0 solid #3097ee; border-width: 0 4px; border-radius: 3px; }
.ruler { display: grid; grid-template-columns: repeat(13, minmax(0, 1fr)); height: 12px; margin: 0 -21px; font-family: "Noto Sans", sans-serif; font-size: 7px; }
.ruler span { display: flex; flex-direction: column; align-items: center; }
.ruler span:first-child { align-items: flex-start; padding-left: 21px; }
.ruler span::after { content: ""; width: 1px; height: 2px; background: #888; }
.work { height: 9px; margin: 0 -3px; background: #5e5e5e; border: 0 solid #3097ee; border-width: 0 3px; border-radius: 2px; }
.green { height: 2px; background: #0fc015; border-bottom: 1px solid #1c3c1c; }
.bar { height: 11px; background: linear-gradient(#7688e2 1px, #5a6ed0 2px, #4f62c0); border-bottom: 1px solid #2a2a2a; }
.trow { height: 11px; background: #333; border-bottom: 1px solid #292929; }
.trow svg { width: 8px; height: 8px; margin: 1px 0 0 -3px; color: #c4c4c4; position: relative; z-index: 2; }
.tracks .tfill { flex: 1; background: #333; }
.playhead { position: absolute; left: 3px; top: 9px; bottom: 0; width: 1px; background: #2d74b5; }
.playhead svg { width: 8px; height: 8px; margin-left: -4px; }
.gutter { display: flex; flex-direction: column; align-items: center; gap: 3px; padding-top: 21px; color: #c4c4c4; }
.gutter svg { width: 8px; height: 9px; }

/* Annotation laid over the window */
.note {
  position: absolute;
  left: 33px;
  top: 62px;
  font-size: 32px;
  line-height: 48px;
  font-weight: 900;
  font-feature-settings: normal;
  color: #f00;
  -webkit-text-stroke: 6px #fff;
  paint-order: stroke fill;
  white-space: nowrap;
}
.pointer { position: absolute; left: 356px; top: 9px; width: 38px; height: 60px; }
```
